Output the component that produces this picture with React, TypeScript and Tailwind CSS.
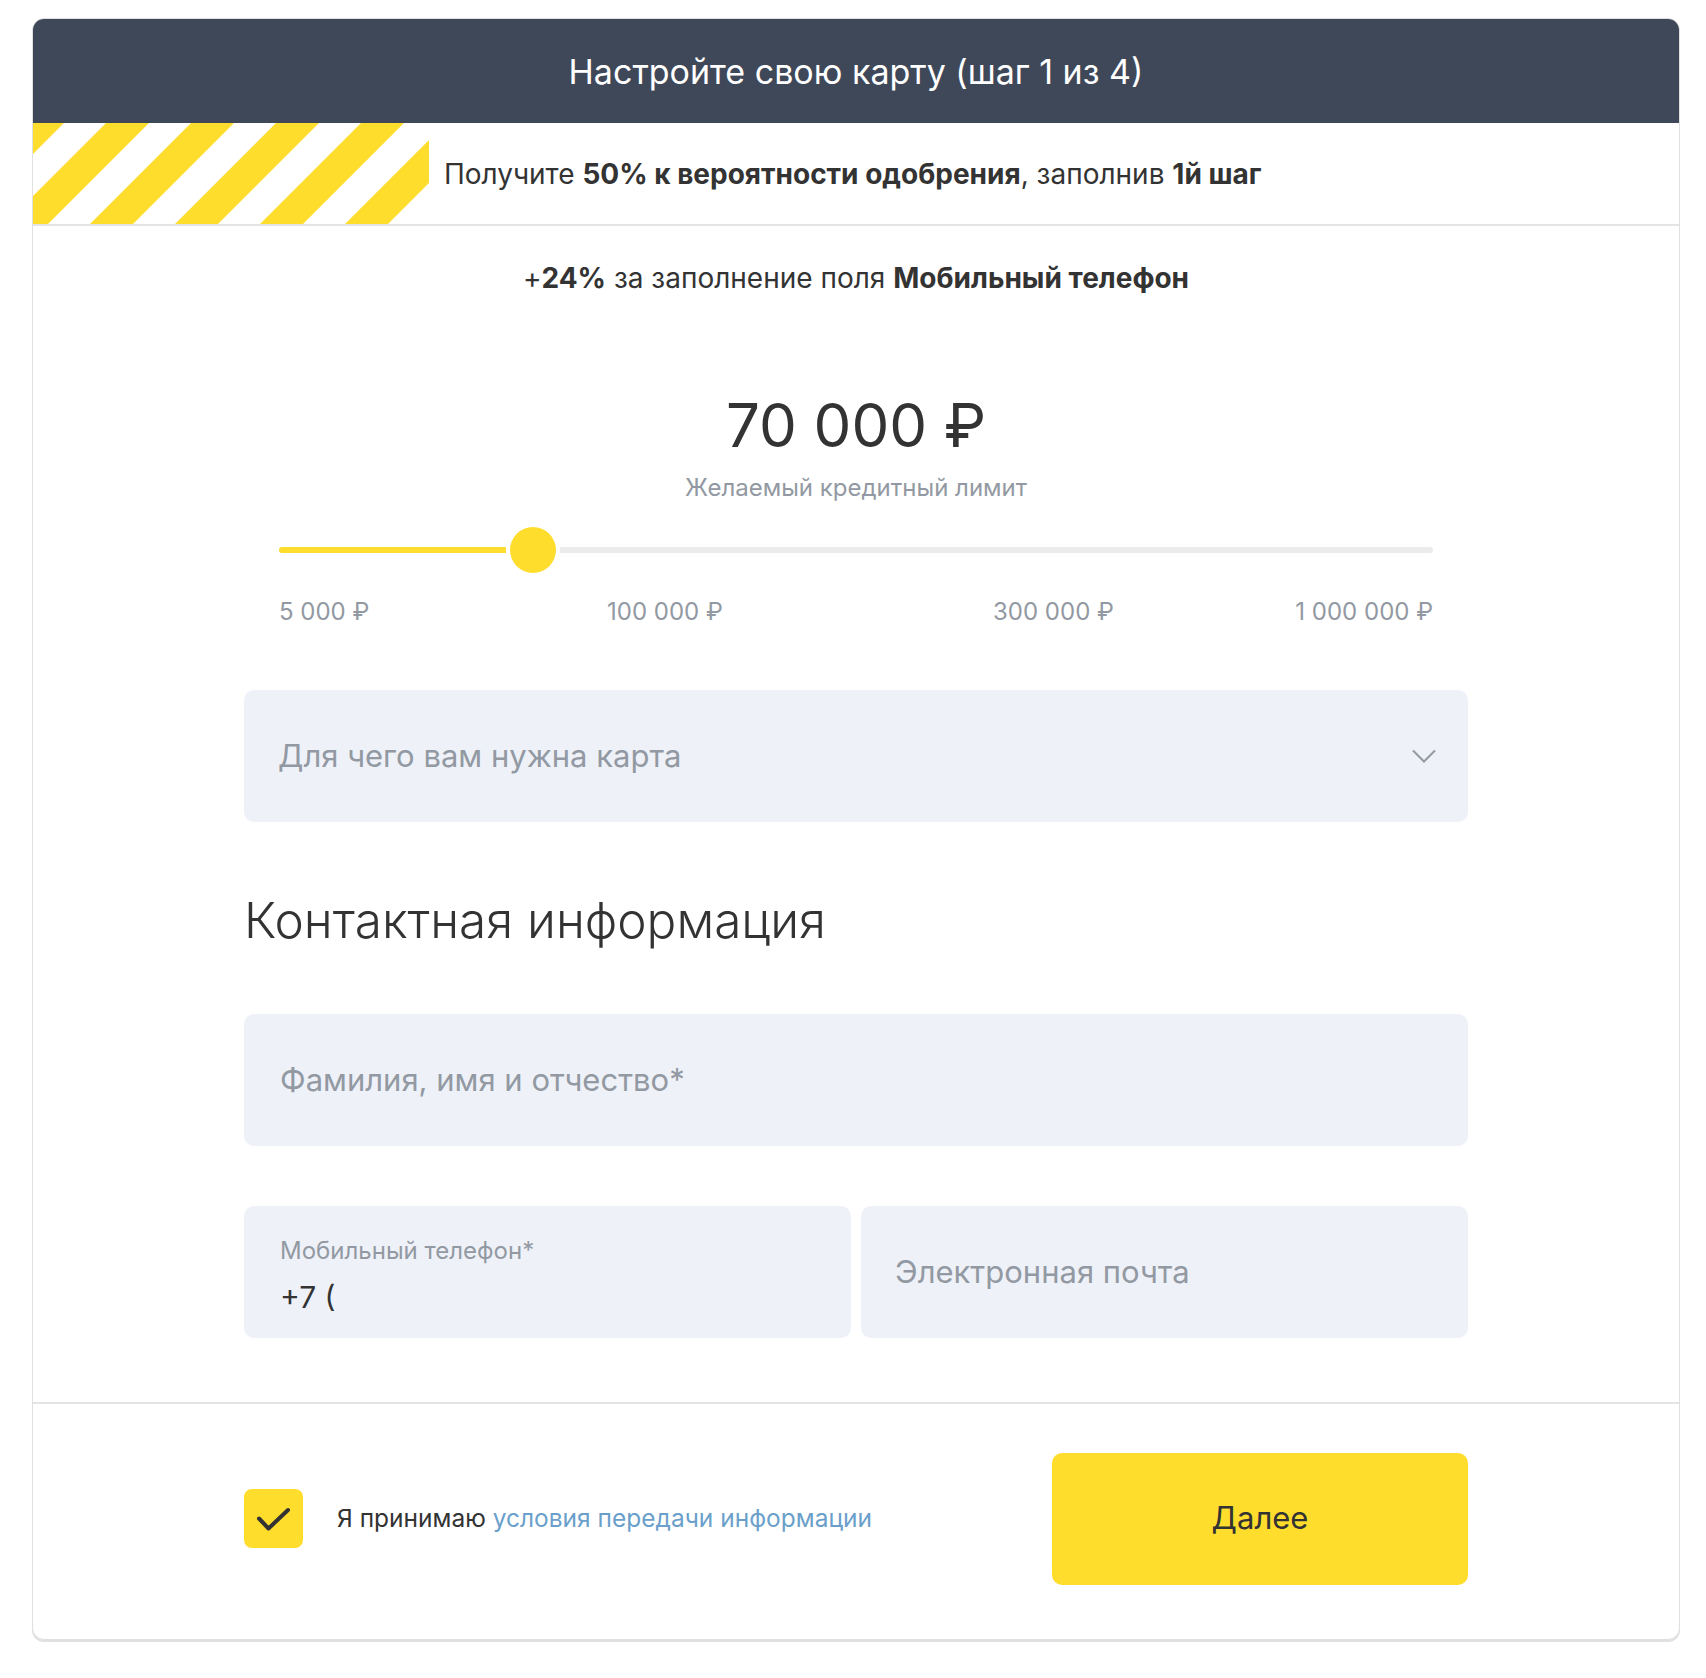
import React from 'react';

const font = "font-['Inter','Noto_Sans',sans-serif]";

const Stripes: React.FC = () => {
  const starts = [-12, 73, 158, 243, 328, 413, 498];
  return (
    <svg width="396" height="101" viewBox="0 0 396 101" className="block shrink-0">
      {starts.map((a) => (
        <polygon
          key={a}
          points={`${a},0 ${a + 43},0 ${a - 58},101 ${a - 101},101`}
          fill="#ffdd2d"
        />
      ))}
    </svg>
  );
};

const Chevron: React.FC = () => (
  <svg width="24" height="14" viewBox="0 0 24 14" fill="none">
    <path d="M1 1.5l11 11 11-11" stroke="#9299a2" strokeWidth="2" />
  </svg>
);

const Slider: React.FC = () => (
  <div className="px-[35px]">
    <div className="relative h-[48px] flex items-center">
      <div className="h-[6px] w-full bg-[#ebebeb] rounded-full" />
      <div className="absolute left-0 top-[21px] h-[6px] w-[227px] bg-[#ffdd2d] rounded-l-full" />
      <div className="absolute left-[227px] top-[-3px] w-[54px] h-[54px] rounded-full bg-white p-[4px]">
        <div className="w-full h-full rounded-full bg-[#ffdd2d]" />
      </div>
    </div>
    <div className="flex mt-[23px] text-[24px] leading-[30px] text-[#9299a2]">
      <span className="w-[328px]">5 000 ₽</span>
      <span className="w-[386px]">100 000 ₽</span>
      <span className="flex-1">300 000 ₽</span>
      <span>1 000 000 ₽</span>
    </div>
  </div>
);

export default function App() {
  return (
    <div className={`${font} bg-white min-h-[1678px] pt-[18px] pl-[32px]`}>
      <div className="w-[1648px] rounded-[12px] border border-[#e0e0e0] shadow-[0_2px_0_#e0e0e0] bg-white overflow-hidden">
        <div className="h-[104px] bg-[#3f4859] flex items-center justify-center text-white text-[34px]">
          Настройте свою карту (шаг 1 из 4)
        </div>

        <div className="flex items-center h-[103px] border-b-2 border-[#e4e4e4]">
          <Stripes />
          <p className="ml-[15px] text-[28px] text-[#333333]">
            Получите <b className="font-bold">50% к вероятности одобрения</b>, заполнив{' '}
            <b className="font-bold">1й шаг</b>
          </p>
        </div>

        <div className="px-[211px] pb-[64px]">
          <p className="mt-[35px] text-center text-[28px] leading-[34px] text-[#333333]">
            +<b className="font-bold">24%</b> за заполнение поля <b className="font-bold">Мобильный телефон</b>
          </p>

          <div className="mt-[94px] text-center text-[60px] leading-[72px] text-[#333333]">70 000 ₽</div>
          <div className="mt-[12px] text-center text-[24px] leading-[30px] text-[#9299a2]">
            Желаемый кредитный лимит
          </div>

          <div className="mt-[23px]">
            <Slider />
          </div>

          <div className="mt-[63px] h-[132px] rounded-[10px] bg-[#eef1f8] flex items-center justify-between pl-[34px] pr-[32px]">
            <span className="text-[31px] text-[#9299a2]">Для чего вам нужна карта</span>
            <Chevron />
          </div>

          <h2 className="mt-[66px] text-[49.5px] leading-[64px] font-light text-[#333333]">
            Контактная информация
          </h2>

          <div className="mt-[62px] h-[132px] rounded-[10px] bg-[#eef1f8] flex items-center px-[36px]">
            <span className="text-[31px] text-[#9299a2]">Фамилия, имя и отчество*</span>
          </div>

          <div className="mt-[60px] grid grid-cols-2 gap-[10px]">
            <div className="h-[132px] rounded-[10px] bg-[#eef1f8] px-[36px] pt-[31px]">
              <div className="text-[24px] leading-[28px] text-[#9299a2]">Мобильный телефон*</div>
              <div className="mt-[14px] text-[30px] leading-[36px] text-[#333333]">+7 (</div>
            </div>
            <div className="h-[132px] rounded-[10px] bg-[#eef1f8] flex items-center px-[34px]">
              <span className="text-[31px] text-[#9299a2]">Электронная почта</span>
            </div>
          </div>
        </div>

        <div className="border-t-2 border-[#e4e4e4] h-[237px] px-[211px] pb-[6px] flex items-center justify-between">
          <div className="flex items-center">
            <div className="w-[59px] h-[59px] rounded-[8px] bg-[#ffdd2d] flex items-center justify-center">
              <svg width="59" height="59" viewBox="0 0 59 59" fill="none">
                <path d="M15 29.5l9.5 10L44 21" stroke="#333333" strokeWidth="4" strokeLinecap="round" strokeLinejoin="round" />
              </svg>
            </div>
            <span className="ml-[34px] text-[24.5px] text-[#333333]">
              Я принимаю <span className="text-[#6b9fcb]">условия передачи информации</span>
            </span>
          </div>
          <button className="w-[416px] h-[132px] rounded-[10px] bg-[#ffdd2d] text-[31px] text-[#333333]">
            Далее
          </button>
        </div>
      </div>
    </div>
  );
}
